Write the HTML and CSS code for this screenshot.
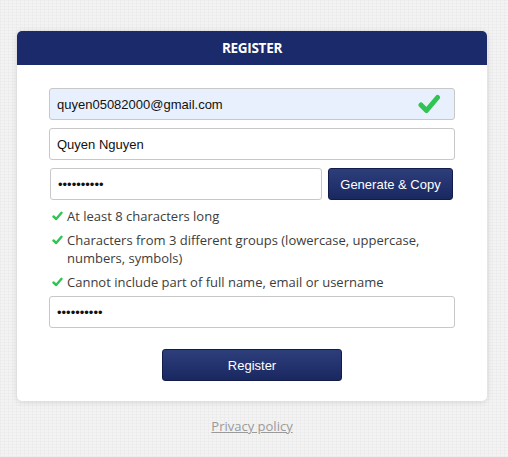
FILE: index.html
```html
<!DOCTYPE html>
<html>
<head>
<meta charset="utf-8">
<link rel="stylesheet" href="styles.css">
</head>
<body>
<div class="page">
  <div class="card">
    <div class="card-header">REGISTER</div>
    <form class="card-body">
      <div class="field">
        <input class="input input-filled" type="text" value="quyen05082000@gmail.com">
        <svg class="valid-icon" width="24" height="22" viewBox="0 0 24 22"><path d="M4 12 L9.5 17.5 L20.5 4.5" fill="none" stroke="#2fc552" stroke-width="5" stroke-linecap="round" stroke-linejoin="round"/></svg>
      </div>
      <input class="input" type="text" value="Quyen Nguyen">
      <div class="pw-row">
        <input class="input pw-input" type="password" value="abcdefghij">
        <button type="button" class="btn btn-gen">Generate &amp; Copy</button>
      </div>
      <ul class="rules">
        <li><svg class="tick" width="11" height="10" viewBox="0 0 11 10"><path d="M1.5 5.5 L4.2 8 L9.5 1.8" fill="none" stroke="#2fc552" stroke-width="2.4" stroke-linecap="round" stroke-linejoin="round"/></svg><span>At least 8 characters long</span></li>
        <li><svg class="tick" width="11" height="10" viewBox="0 0 11 10"><path d="M1.5 5.5 L4.2 8 L9.5 1.8" fill="none" stroke="#2fc552" stroke-width="2.4" stroke-linecap="round" stroke-linejoin="round"/></svg><span>Characters from 3 different groups (lowercase, uppercase, numbers, symbols)</span></li>
        <li><svg class="tick" width="11" height="10" viewBox="0 0 11 10"><path d="M1.5 5.5 L4.2 8 L9.5 1.8" fill="none" stroke="#2fc552" stroke-width="2.4" stroke-linecap="round" stroke-linejoin="round"/></svg><span>Cannot include part of full name, email or username</span></li>
      </ul>
      <input class="input" type="password" value="abcdefghij">
      <div class="actions">
        <button type="button" class="btn btn-register">Register</button>
      </div>
    </form>
  </div>
  <div class="footer"><a href="#">Privacy policy</a></div>
</div>
</body>
</html>
```

FILE: styles.css
```css
* { box-sizing: border-box; }
html, body { margin: 0; padding: 0; height: 100%; }
body {
  background-color: #f3f3f3;
  background-image:
    repeating-linear-gradient(0deg, rgba(0,0,0,0.018) 0 1px, transparent 1px 3px),
    repeating-linear-gradient(90deg, rgba(0,0,0,0.018) 0 1px, transparent 1px 4px);
  font-family: "Open Sans", "Noto Sans", sans-serif;
}
.page {
  padding: 31px 21px 0 17px;
}
.card {
  width: 470px;
  background: #fff;
  border-radius: 5px;
  box-shadow: 0 1px 6px rgba(0,0,0,0.12);
  overflow: hidden;
}
.card-header {
  height: 34px;
  background: #1b2a6a;
  color: #fff;
  font-weight: 700;
  font-size: 13.5px;
  display: flex;
  align-items: center;
  justify-content: center;
  letter-spacing: -0.3px;
}
.card-body {
  padding: 23px 32px 20px 32px;
  display: flex;
  flex-direction: column;
  margin: 0;
}
.field { position: relative; margin-bottom: 8px; }
.input {
  display: block;
  width: 100%;
  height: 32px;
  border: 1px solid #c8c8c8;
  border-radius: 3px;
  padding: 0 7px;
  font-family: "Liberation Sans", Arial, sans-serif;
  font-size: 13px;
  color: #111;
  background: #fff;
  outline: none;
}
.input-filled { background: #e8f0fe; }
.valid-icon { position: absolute; right: 14px; top: 5px; }
.field + .input { margin-bottom: 8px; }
.pw-row { display: flex; gap: 6px; margin-right: 2px; margin-left: 1px; }
.pw-input { flex: 1; width: auto; }
.btn {
  height: 32px;
  border: 1px solid #111c4a;
  border-radius: 3px;
  background: linear-gradient(#2d3e7c, #1a2860);
  color: #fff;
  font-family: "Liberation Sans", Arial, sans-serif;
  font-size: 13px;
  cursor: pointer;
}
.btn-gen { width: 125px; padding: 0; }
.rules {
  list-style: none;
  margin: 7px 0 5px 0;
  padding: 0 0 0 3px;
  font-size: 13px;
  line-height: 18px;
  color: #3c3c3c;
}
.rules li { display: flex; align-items: flex-start; margin-bottom: 6px; }
.rules li:last-child { margin-bottom: 0; }
.tick { flex: none; margin: 4px 4px 0 0; }
.actions { display: flex; justify-content: center; margin-top: 21px; }
.btn-register { width: 180px; }
.footer {
  text-align: center;
  margin-top: 16px;
  font-size: 13px;
}
.footer a { color: #9a9a9a; text-decoration: underline; }
```
